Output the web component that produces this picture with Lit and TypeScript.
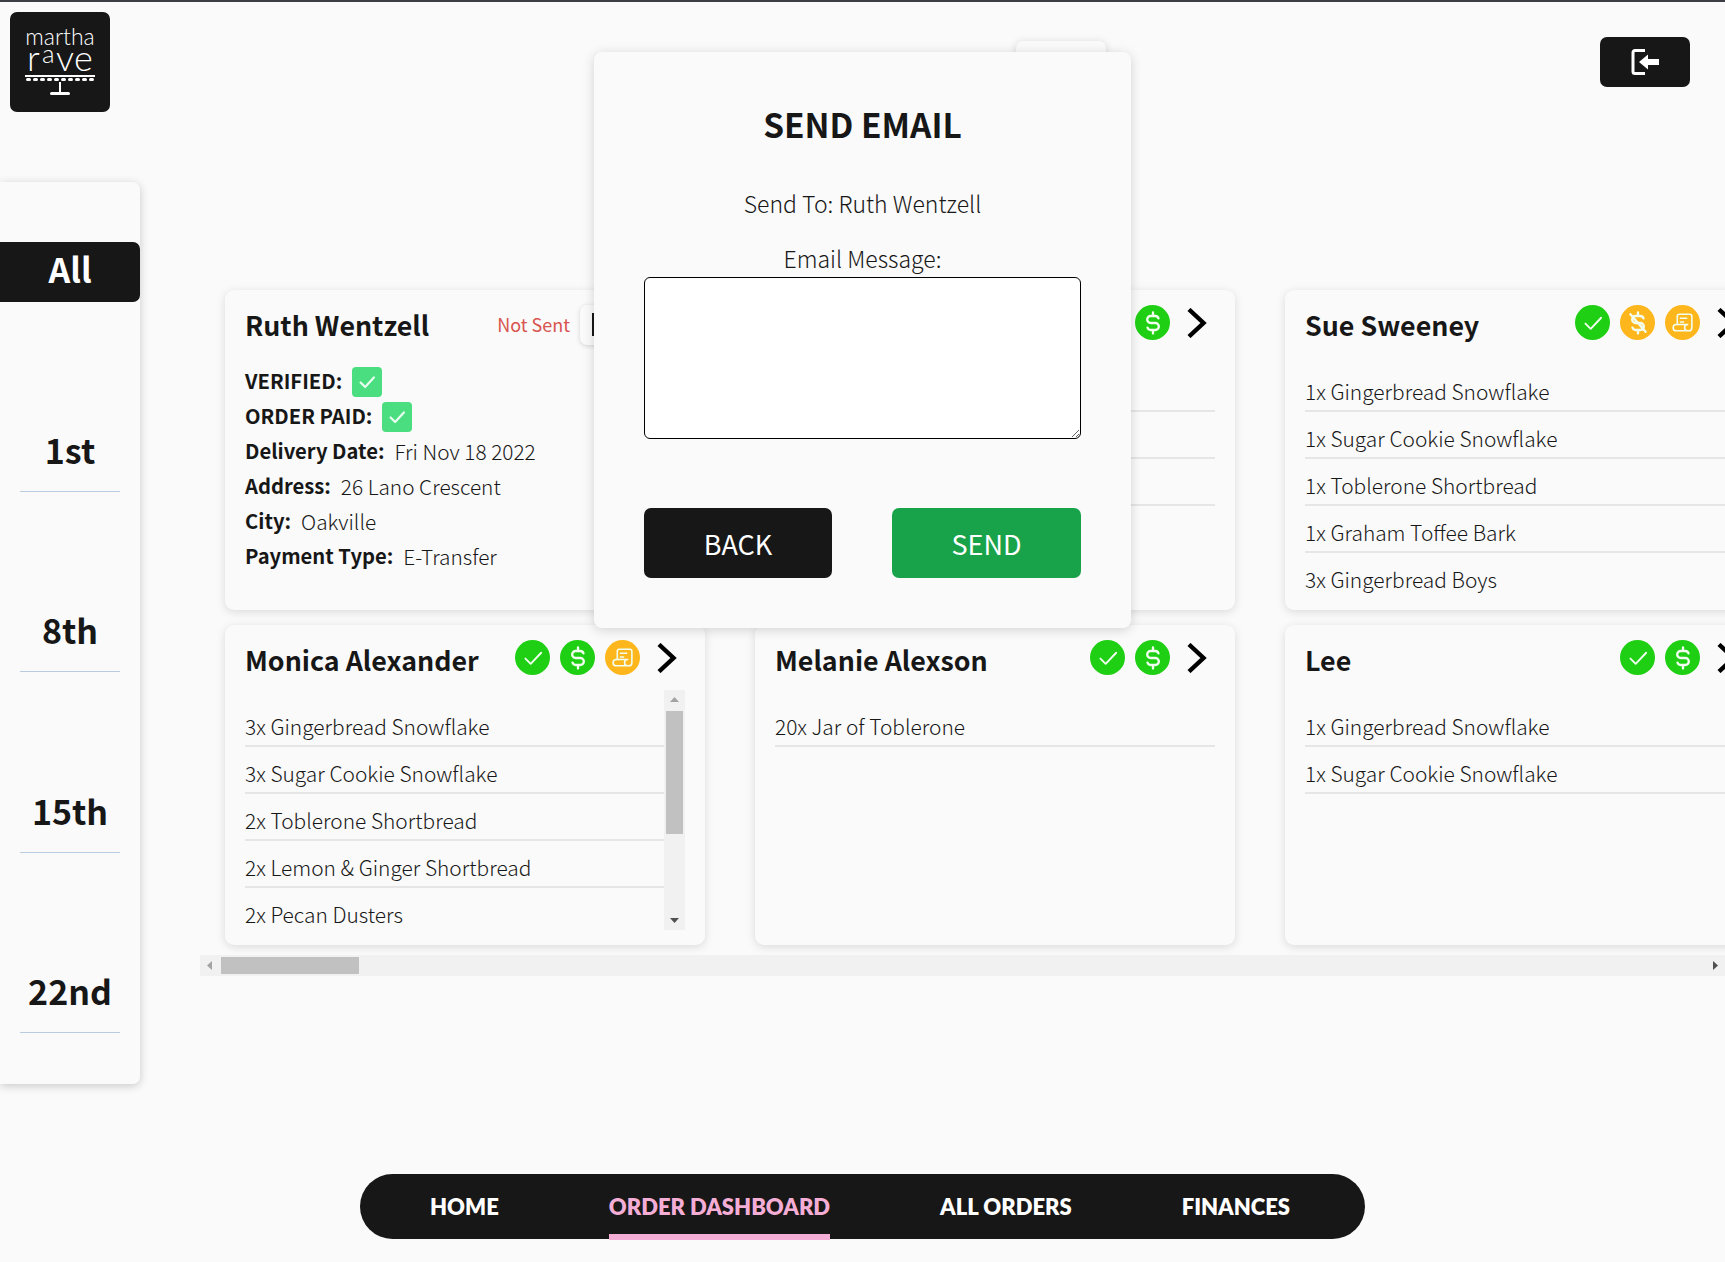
import { LitElement, html, css, svg } from "lit";
import { customElement } from "lit/decorators.js";

const ICONS = {
  check: { size: 28, width: 1.6, path: svg`<path d="M5.5 12.5l4.5 4.5L19 7.5" />` },
  dollar: {
    size: 28,
    width: 2,
    path: svg`<path d="M16.7 8a3 3 0 0 0-2.7-2h-4a3 3 0 0 0 0 6h4a3 3 0 0 1 0 6h-4a3 3 0 0 1-2.7-2M12 3v3m0 12v3" />`,
  },
  unpaid: {
    size: 28,
    width: 2,
    path: svg`<path d="M16.7 8a3 3 0 0 0-2.7-2h-4a3 3 0 0 0 0 6h4a3 3 0 0 1 0 6h-4a3 3 0 0 1-2.7-2M12 3v3m0 12v3M5.5 4.5l13 15" />`,
  },
  receipt: {
    size: 25,
    width: 1.5,
    path: svg`<path d="M17 20H6a3 3 0 0 1 0-6h11a3 3 0 0 0 0 6h1a3 3 0 0 0 3-3V6a2 2 0 0 0-2-2H9a2 2 0 0 0-2 2v8M10 8h6M10 11.5h3" />`,
  },
};

type IconName = keyof typeof ICONS;

interface Order {
  name: string;
  icons: { icon: IconName; tone: string }[];
  items: string[];
  scrolls?: boolean;
}

const ok = (icon: IconName) => ({ icon, tone: "green" });
const warn = (icon: IconName) => ({ icon, tone: "orange" });

const ORDERS: Order[] = [
  {
    name: "",
    icons: [ok("check"), ok("dollar")],
    items: ["", "", ""],
  },
  {
    name: "Sue Sweeney",
    icons: [ok("check"), warn("unpaid"), warn("receipt")],
    items: [
      "1x Gingerbread Snowflake",
      "1x Sugar Cookie Snowflake",
      "1x Toblerone Shortbread",
      "1x Graham Toffee Bark",
      "3x Gingerbread Boys",
    ],
  },
  {
    name: "Monica Alexander",
    icons: [ok("check"), ok("dollar"), warn("receipt")],
    items: [
      "3x Gingerbread Snowflake",
      "3x Sugar Cookie Snowflake",
      "2x Toblerone Shortbread",
      "2x Lemon & Ginger Shortbread",
      "2x Pecan Dusters",
    ],
    scrolls: true,
  },
  {
    name: "Melanie Alexson",
    icons: [ok("check"), ok("dollar")],
    items: ["20x Jar of Toblerone"],
  },
  {
    name: "Lee",
    icons: [ok("check"), ok("dollar")],
    items: ["1x Gingerbread Snowflake", "1x Sugar Cookie Snowflake"],
  },
];

const DETAILS = [
  ["Delivery Date:", "Fri Nov 18 2022"],
  ["Address:", "26 Lano Crescent"],
  ["City:", "Oakville"],
  ["Payment Type:", "E-Transfer"],
];

const NAV = ["HOME", "ORDER DASHBOARD", "ALL ORDERS", "FINANCES"];

@customElement("app-root")
export class AppRoot extends LitElement {
  static styles = css`
    :host {
      display: block;
      position: relative;
      min-height: 1262px;
      box-sizing: border-box;
      border-top: 2px solid #3d3d45;
      background: #fafafa;
      color: #171717;
      font-family: "Noto Sans CJK SC", "Noto Sans", sans-serif;
      overflow: hidden;
    }
    * {
      box-sizing: border-box;
    }

    /* top row */
    .top {
      display: flex;
      align-items: flex-start;
      padding: 10px 35px 0 10px;
    }
    .logo {
      width: 100px;
      height: 100px;
      border-radius: 7px;
      background: #171717;
      color: #fff;
      display: flex;
      flex-direction: column;
      align-items: center;
      padding-top: 13px;
    }
    .logo-top {
      height: 22px;
      font: 300 23px/22px Lato, sans-serif;
    }
    .logo-main {
      display: flex;
      align-items: flex-end;
      height: 25px;
      padding-bottom: 2px;
      font: 300 36px/26px Lato, sans-serif;
      letter-spacing: 0.3px;
    }
    .logo-main span {
      font-size: 26px;
      line-height: 26px;
      margin: 0 1px 4px 2px;
    }
    .logo svg {
      display: block;
    }
    .tab {
      width: 90px;
      height: 40px;
      margin: 29px 0 0 906px;
      border-radius: 7px;
      background: #fafafa;
      box-shadow: 0 1px 8px rgba(0, 0, 0, 0.14);
    }
    .logout {
      margin: 25px 0 0 auto;
      width: 90px;
      height: 50px;
      border: 0;
      border-radius: 7px;
      background: #171717;
      display: flex;
      align-items: center;
      justify-content: center;
      padding: 0;
    }

    /* sidebar + board */
    .main {
      display: flex;
      align-items: flex-start;
      margin-top: 70px;
    }
    .side {
      flex: none;
      width: 140px;
      height: 902px;
      padding-top: 60px;
      border-radius: 0 7px 7px 0;
      background: #fafafa;
      box-shadow: 0 2px 10px rgba(0, 0, 0, 0.2);
      display: flex;
      flex-direction: column;
      align-items: center;
      font-size: 34px;
      font-weight: 700;
    }
    .day {
      width: 100px;
      height: 61px;
      margin-top: 119.4px;
      border-bottom: 1px solid #b9cbe0;
      text-align: center;
      line-height: 37px;
    }
    .day.all {
      width: 100%;
      height: 60px;
      margin: 0 0 9.6px;
      border: 0;
      border-radius: 0 7px 7px 0;
      background: #171717;
      color: #fff;
      line-height: 54px;
    }
    .board {
      flex: 1;
      min-width: 0;
      margin: 88px 0 0 60px;
      overflow: hidden;
    }
    .grid {
      padding: 20px 0 10px 25px;
      display: grid;
      grid-template-columns: repeat(3, 480px);
      grid-auto-rows: 320px;
      gap: 15px 50px;
    }
    .card {
      border-radius: 9px;
      background: #fafafa;
      box-shadow: 0 2px 10px rgba(0, 0, 0, 0.13);
      padding: 0 20px 15px;
      display: flex;
      flex-direction: column;
      min-width: 0;
    }
    .head {
      flex: none;
      height: 65px;
      padding: 15px 8px 0 0;
      display: flex;
      align-items: flex-start;
      gap: 10px;
    }
    .name {
      margin-right: auto;
      font-size: 26.8px;
      font-weight: 700;
      line-height: 40px;
      white-space: nowrap;
    }
    .badge {
      flex: none;
      width: 35px;
      height: 35px;
      border-radius: 50%;
      display: flex;
      align-items: center;
      justify-content: center;
    }
    .badge.green {
      background: #1fcf14;
    }
    .badge.orange {
      background: #fdb71c;
    }
    .badge svg {
      fill: none;
      stroke: #f2fff0;
      stroke-linecap: round;
      stroke-linejoin: round;
    }
    .chev {
      flex: none;
      margin: 3px 0 0 7px;
    }
    .body {
      flex: 1;
      min-height: 0;
      display: flex;
    }
    .list {
      flex: 1;
      min-width: 0;
      padding-top: 10px;
      overflow: hidden;
    }
    .row {
      height: 47px;
      padding-top: 11px;
      font-size: 20.9px;
      line-height: 30px;
      border-bottom: 2px solid #e6e6e6;
      font-weight: 300;
      white-space: nowrap;
    }
    .list.full .row:last-child {
      height: 42px;
      border-bottom: 0;
    }

    /* ruth's card */
    .sent {
      margin-top: 6px;
      color: #d9534f;
      font-size: 18px;
      line-height: 26px;
      white-space: nowrap;
    }
    .send-btn {
      flex: none;
      width: 97px;
      height: 40px;
      border-radius: 7px;
      background: #fafafa;
      box-shadow: 0 1px 5px rgba(0, 0, 0, 0.16);
      padding: 8px 12px;
    }
    .send-btn i {
      display: block;
      width: 3px;
      height: 23px;
      background: #171717;
    }
    .details {
      padding-top: 8px;
    }
    .line {
      height: 35px;
      display: flex;
      align-items: center;
      gap: 10px;
      font-size: 20.8px;
      font-weight: 300;
    }
    .line b {
      font-size: 20.2px;
      font-weight: 700;
    }
    .tick {
      width: 30px;
      height: 30px;
      margin-top: 2px;
      border-radius: 4px;
      background: #4ade80;
      display: flex;
      align-items: center;
      justify-content: center;
    }
    .tick svg {
      fill: none;
      stroke: #e8fff0;
      stroke-width: 2.4;
      stroke-linecap: round;
      stroke-linejoin: round;
    }

    /* scrollbars, windows style */
    .hbar {
      height: 21px;
      background: #f1f1f1;
      display: flex;
      align-items: center;
      justify-content: space-between;
      position: relative;
    }
    .hbar .thumb {
      position: absolute;
      left: 21px;
      top: 2px;
      width: 138px;
      height: 17px;
      background: #c1c1c1;
    }
    .vbar {
      flex: none;
      width: 21px;
      background: #f1f1f1;
      display: flex;
      flex-direction: column;
      justify-content: space-between;
      position: relative;
    }
    .vbar .thumb {
      position: absolute;
      left: 2px;
      top: 21px;
      width: 17px;
      height: 123px;
      background: #c1c1c1;
    }
    .hbar svg,
    .vbar svg {
      display: block;
    }

    /* bottom nav */
    .nav {
      width: 1005px;
      height: 65px;
      margin: 90px auto 0;
      padding-left: 70px;
      border-radius: 33px;
      background: #171717;
      display: flex;
      gap: 110px;
      font: 800 22px/66px Lato, sans-serif;
      color: #fff;
    }
    .nav a {
      height: 66px;
      white-space: nowrap;
    }
    .nav a.on {
      color: #f4aed6;
      box-shadow: inset 0 -6px 0 #f4aed6;
    }

    /* modal over the page */
    .modal {
      position: absolute;
      left: 594px;
      top: 50px;
      width: 537px;
      height: 576px;
      padding: 49px 50px 50px;
      border-radius: 8px;
      background: #fafafa;
      box-shadow: 0 2px 12px rgba(0, 0, 0, 0.16);
      display: flex;
      flex-direction: column;
      align-items: center;
    }
    .modal h2 {
      margin: 0 0 41px;
      font-size: 33.4px;
      line-height: 46px;
      font-weight: 700;
    }
    .modal p {
      margin: 0 0 25px;
      font-size: 23px;
      line-height: 30px;
      font-weight: 300;
    }
    .modal p.tight {
      margin-bottom: 4px;
    }
    .modal textarea {
      display: block;
      width: 100%;
      height: 162px;
      flex: none;
      border: 1.5px solid #000;
      border-radius: 6px;
      background: #fff;
      resize: vertical;
    }
    .actions {
      width: 100%;
      margin-top: 69px;
      display: flex;
      justify-content: space-between;
    }
    .actions button {
      width: 188px;
      height: 70px;
      border: 0;
      border-radius: 7px;
      color: #fff;
      font: 400 27px "Noto Sans CJK SC", sans-serif;
      background: #171717;
    }
    .actions button.go {
      width: 189px;
      background: #18a34a;
    }
  `;

  private renderLogo() {
    return html`<div class="logo">
      <div class="logo-top">martha</div>
      <div class="logo-main">r<span>a</span>ve</div>
      <svg width="72" height="24" viewBox="0 0 72 24" fill="#fff">
        <rect x="1" y="3" width="70" height="2" />
        ${Array.from({ length: 10 }, (_, i) => svg`<rect x=${2 + i * 7} y="6" width="5" height="3" rx="1.5" />`)}
        <rect x="35" y="10" width="2" height="11" />
        <rect x="26" y="20" width="20" height="3" rx="1.5" />
      </svg>
    </div>`;
  }

  private renderHead(o: Order) {
    return html`<div class="head">
      <div class="name">${o.name}</div>
      ${o.icons.map((b) => {
        const icon = ICONS[b.icon];
        return html`<span class="badge ${b.tone}">
          <svg width=${icon.size} height=${icon.size} viewBox="0 0 24 24" stroke-width=${icon.width}>${icon.path}</svg>
        </span>`;
      })}
      ${this.renderChevron()}
    </div>`;
  }

  private renderChevron() {
    return html`<svg class="chev" width="20" height="30" viewBox="0 0 20 30" fill="none" stroke="#000" stroke-width="4.4">
      <path d="M2 1.5l14.5 13.5L2 28.5" />
    </svg>`;
  }

  private renderVbar() {
    return html`<div class="vbar">
      <svg width="21" height="21"><polygon points="10.5,7 6,12 15,12" fill="#a3a3a3" /></svg>
      <div class="thumb"></div>
      <svg width="21" height="21"><polygon points="10.5,14 6,9 15,9" fill="#505050" /></svg>
    </div>`;
  }

  private renderCard(o: Order) {
    const full = o.items.length >= 5;
    return html`<div class="card">
      ${this.renderHead(o)}
      <div class="body">
        <div class="list ${full ? "full" : ""}">
          ${o.items.map((t) => html`<div class="row">${t}</div>`)}
        </div>
        ${o.scrolls ? this.renderVbar() : ""}
      </div>
    </div>`;
  }

  private renderRuth() {
    const tick = html`<span class="tick">
      <svg width="22" height="22" viewBox="0 0 24 24"><path d="M5 12.5l5 5L19.5 7" /></svg>
    </span>`;
    return html`<div class="card">
      <div class="head">
        <div class="name">Ruth Wentzell</div>
        <div class="sent">Not Sent</div>
        <div class="send-btn"><i></i></div>
      </div>
      <div class="details">
        <div class="line"><b>VERIFIED:</b>${tick}</div>
        <div class="line"><b>ORDER PAID:</b>${tick}</div>
        ${DETAILS.map(([k, v]) => html`<div class="line"><b>${k}</b><span>${v}</span></div>`)}
      </div>
    </div>`;
  }

  render() {
    return html`
      <div class="top">
        ${this.renderLogo()}
        <div class="tab"></div>
        <button class="logout" aria-label="Log out">
          <svg width="30" height="30" viewBox="0 0 30 30">
            <path d="M15 3.5H5a2 2 0 0 0-2 2v19a2 2 0 0 0 2 2h10" fill="none" stroke="#fff" stroke-width="3" />
            <polygon points="9,15 18,7.5 18,12 29,12 29,18 18,18 18,22.5" fill="#fff" />
          </svg>
        </button>
      </div>
      <div class="main">
        <div class="side">
          <div class="day all">All</div>
          ${["1st", "8th", "15th", "22nd"].map((d) => html`<div class="day">${d}</div>`)}
        </div>
        <div class="board">
          <div class="grid">
            ${this.renderRuth()} ${ORDERS.map((o) => this.renderCard(o))}
          </div>
          <div class="hbar">
            <svg width="21" height="21"><polygon points="7,10.5 12,6 12,15" fill="#a3a3a3" /></svg>
            <div class="thumb"></div>
            <svg width="21" height="21"><polygon points="14,10.5 9,6 9,15" fill="#505050" /></svg>
          </div>
        </div>
      </div>
      <div class="nav">
        ${NAV.map((n) => html`<a class=${n === "ORDER DASHBOARD" ? "on" : ""}>${n}</a>`)}
      </div>
      <div class="modal">
        <h2>SEND EMAIL</h2>
        <p>Send To: Ruth Wentzell</p>
        <p class="tight">Email Message:</p>
        <textarea></textarea>
        <div class="actions">
          <button>BACK</button>
          <button class="go">SEND</button>
        </div>
      </div>
    `;
  }
}
